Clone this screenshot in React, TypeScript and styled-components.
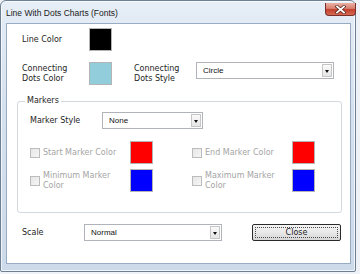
import React from 'react';
import styled, { createGlobalStyle } from 'styled-components';

const GlobalStyle = createGlobalStyle`
  html, body {
    margin: 0;
    padding: 0;
    background: #eef1f5;
  }
  body {
    width: 360px;
    height: 274px;
    overflow: hidden;
    font-family: "DejaVu Sans", Verdana, sans-serif;
  }
`;

const Window = styled.div`
  width: 356px;
  height: 272px;
  box-sizing: border-box;
  border: 1px solid #6d7f93;
  border-radius: 6px 6px 2px 2px;
  background: linear-gradient(180deg, #e6eef7 0%, #d5e1ee 40%, #cddaea 100%);
  box-shadow: inset 0 0 0 1px rgba(255, 255, 255, 0.7);
  padding: 0 4px 7px 5px;
  display: flex;
  flex-direction: column;
`;

const TitleBar = styled.div`
  height: 22px;
  display: flex;
  align-items: center;
`;

const Title = styled.span`
  font-family: "Liberation Sans", Arial, sans-serif;
  font-size: 8.5px;
  color: #1a1a1a;
  padding-top: 2px;
`;

const CaptionClose = styled.div`
  margin-left: auto;
  margin-right: -5px;
  align-self: flex-start;
  margin-top: 2px;
  width: 31px;
  height: 13px;
  box-sizing: border-box;
  border: 1px solid #7a2f2a;
  border-top: none;
  border-radius: 0 0 4px 4px;
  background: linear-gradient(180deg, #eab0a4 0%, #d9806f 45%, #c2412f 55%, #d56a52 100%);
  display: flex;
  align-items: center;
  justify-content: center;
`;

const Client = styled.div`
  flex: 1;
  background: #fff;
  border: 1px solid #97abc2;
  padding: 4px 0 0 15px;
  display: flex;
  flex-direction: column;
`;

const Row = styled.div<{ $top?: number }>`
  display: flex;
  align-items: center;
  margin-top: ${(p) => p.$top ?? 0}px;
`;

const Label = styled.div<{ $width: number; $muted?: boolean }>`
  width: ${(p) => p.$width}px;
  flex-shrink: 0;
  font-size: 8px;
  line-height: 10px;
  color: ${(p) => (p.$muted ? '#a4a4a4' : '#1e1e1e')};
`;

const Swatch = styled.div<{ $color: string }>`
  width: 23px;
  height: 23px;
  box-sizing: border-box;
  flex-shrink: 0;
  border: 1px solid #b4b4b4;
  background: ${(p) => p.$color};
`;

const Select = styled.div<{ $width: number; $gap?: number }>`
  width: ${(p) => p.$width}px;
  height: 17px;
  box-sizing: border-box;
  margin-left: ${(p) => p.$gap ?? 0}px;
  align-self: flex-start;
  border: 1px solid #b0b4ba;
  background: #fff;
  display: flex;
  align-items: center;
  padding: 1px 1px 1px 6px;
  font-family: "Liberation Sans", Arial, sans-serif;
  font-size: 8px;
  color: #111;
`;

const SelectText = styled.span`
  flex: 1;
`;

const DropButton = styled.div`
  width: 10px;
  height: 13px;
  box-sizing: border-box;
  border: 1px solid #c6c6c6;
  background: linear-gradient(180deg, #fafafa 0%, #e6e6e6 100%);
  display: flex;
  align-items: center;
  justify-content: center;

  &::after {
    content: '';
    border-left: 2.5px solid transparent;
    border-right: 2.5px solid transparent;
    border-top: 3px solid #111;
    margin-top: 1px;
  }
`;

const Group = styled.fieldset`
  margin: 11px 0 0 -5px;
  width: 325px;
  box-sizing: border-box;
  border: 1px solid #d3d9de;
  border-radius: 3px;
  padding: 6px 0 20px 12px;
`;

const Legend = styled.legend`
  font-size: 8px;
  line-height: 10px;
  color: #1e1e1e;
  padding: 0 2px;
  margin-left: -5px;
`;

const MarkerGrid = styled.div`
  margin-top: 12px;
  display: grid;
  grid-template-columns: 162px 123px;
  row-gap: 5px;
`;

const MarkerOption = styled.div`
  display: flex;
  align-items: center;
`;

const CheckArea = styled.div`
  width: 100px;
  display: flex;
  align-items: center;
  gap: 3px;
`;

const CheckBox = styled.span`
  width: 10px;
  height: 10px;
  box-sizing: border-box;
  flex-shrink: 0;
  border: 1px solid #bcbcbc;
  background: linear-gradient(135deg, #e6e6e6 0%, #f6f6f6 100%);
`;

const CloseButton = styled.div`
  margin-left: 30px;
  width: 89px;
  height: 17px;
  box-sizing: border-box;
  align-self: flex-start;
  border: 1px solid #2a2a2a;
  border-radius: 2px;
  background: linear-gradient(180deg, #f5f5f5 0%, #e8e8e8 50%, #d6d6d6 100%);
  padding: 2px;
  display: flex;
`;

const FocusRing = styled.div`
  flex: 1;
  border: 1px dotted #4a4a4a;
  display: flex;
  align-items: center;
  justify-content: center;
  font-size: 8px;
  color: #1e1e1e;
`;

type Marker = { label: string; color: string };

const markers: Marker[] = [
  { label: 'Start Marker Color', color: '#ff0000' },
  { label: 'End Marker Color', color: '#ff0000' },
  { label: 'Minimum Marker Color', color: '#0000ff' },
  { label: 'Maximum Marker Color', color: '#0000ff' },
];

const Dropdown: React.FC<{ value: string; width: number; gap?: number }> = ({ value, width, gap }) => (
  <Select $width={width} $gap={gap}>
    <SelectText>{value}</SelectText>
    <DropButton />
  </Select>
);

const App: React.FC = () => {
  return (
    <>
      <GlobalStyle />
      <Window>
        <TitleBar>
          <Title>Line With Dots Charts (Fonts)</Title>
          <CaptionClose>
            <svg width="11" height="9" viewBox="0 0 11 9">
              <path d="M2 1.5 L9 7.5 M9 1.5 L2 7.5" stroke="#5a2520" strokeWidth="3.2" strokeLinecap="square" />
              <path d="M2 1.5 L9 7.5 M9 1.5 L2 7.5" stroke="#fff" strokeWidth="1.8" strokeLinecap="square" />
            </svg>
          </CaptionClose>
        </TitleBar>
        <Client>
          <Row>
            <Label $width={67}>Line Color</Label>
            <Swatch $color="#000000" />
          </Row>
          <Row $top={11}>
            <Label $width={67}>Connecting<br />Dots Color</Label>
            <Swatch $color="#92cddc" />
            <Label $width={62} style={{ marginLeft: 22 }}>Connecting<br />Dots Style</Label>
            <Dropdown value="Circle" width={138} />
          </Row>
          <Group>
            <Legend>Markers</Legend>
            <Row>
              <Label $width={72}>Marker Style</Label>
              <Dropdown value="None" width={101} />
            </Row>
            <MarkerGrid>
              {markers.map((m) => (
                <MarkerOption key={m.label}>
                  <CheckArea>
                    <CheckBox />
                    <Label $width={84} $muted>{m.label}</Label>
                  </CheckArea>
                  <Swatch $color={m.color} />
                </MarkerOption>
              ))}
            </MarkerGrid>
          </Group>
          <Row $top={11}>
            <Label $width={62}>Scale</Label>
            <Dropdown value="Normal" width={138} />
            <CloseButton>
              <FocusRing>Close</FocusRing>
            </CloseButton>
          </Row>
        </Client>
      </Window>
    </>
  );
};

export default App;
